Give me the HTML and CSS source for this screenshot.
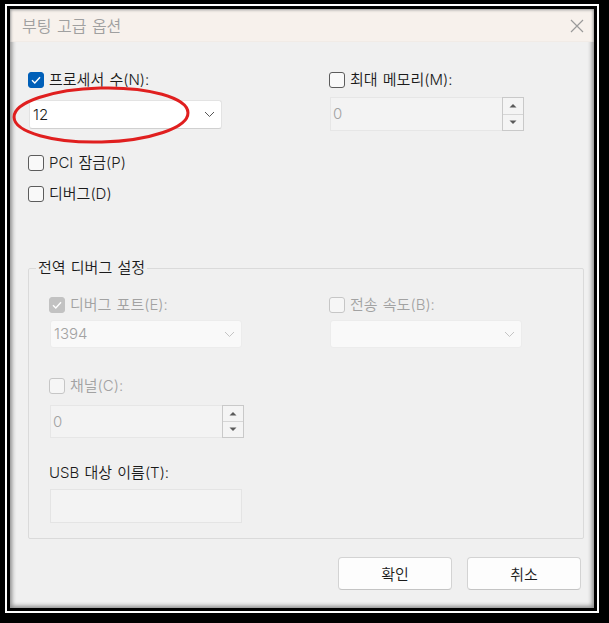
FILE: index.html
```html
<!DOCTYPE html>
<html lang="ko">
<head>
<meta charset="utf-8">
<link rel="stylesheet" href="styles.css">
</head>
<body>
<div class="frame">
  <div class="dialog">
    <div class="titlebar">
      <span class="title">부팅 고급 옵션</span>
      <svg class="close" width="14" height="14" viewBox="0 0 14 14"><path d="M1 1 L13 13 M13 1 L1 13" stroke="#9a9a9a" stroke-width="1.2" fill="none"/></svg>
    </div>
    <div class="content">
      <div class="top">
        <div class="col">
          <label class="check-row">
            <span class="box checked"><svg width="16" height="16" viewBox="0 0 16 16"><path d="M4 8.2 L6.8 11 L12 5.2" stroke="#fff" stroke-width="1.4" fill="none"/></svg></span>
            <span class="lbl">프로세서 수(N):</span>
          </label>
          <div class="combo proc">
            <span class="val">12</span>
            <svg class="chev" width="11" height="7" viewBox="0 0 11 7"><path d="M1 1 L5.5 5.5 L10 1" stroke="#555" stroke-width="1" fill="none"/></svg>
          </div>
          <label class="check-row pci">
            <span class="box"></span>
            <span class="lbl">PCI 잠금(P)</span>
          </label>
          <label class="check-row dbg">
            <span class="box"></span>
            <span class="lbl">디버그(D)</span>
          </label>
        </div>
        <div class="col">
          <label class="check-row">
            <span class="box"></span>
            <span class="lbl">최대 메모리(M):</span>
          </label>
          <div class="spin mem">
            <span class="val dis">0</span>
            <div class="spin-btns">
              <span class="sb"><svg width="8" height="5" viewBox="0 0 8 5"><path d="M0.5 4.5 L4 1 L7.5 4.5 Z" fill="#5a5a5a"/></svg></span>
              <span class="sb"><svg width="8" height="5" viewBox="0 0 8 5"><path d="M0.5 0.5 L4 4 L7.5 0.5 Z" fill="#5a5a5a"/></svg></span>
            </div>
          </div>
        </div>
      </div>

      <fieldset class="group">
        <legend>전역 디버그 설정</legend>
        <div class="group-in">
          <div class="top">
            <div class="col">
              <label class="check-row">
                <span class="box checked disabled"><svg width="16" height="16" viewBox="0 0 16 16"><path d="M4 8.2 L6.8 11 L12 5.2" stroke="#fff" stroke-width="1.4" fill="none"/></svg></span>
                <span class="lbl dis">디버그 포트(E):</span>
              </label>
              <div class="combo disabled port">
                <span class="val dis">1394</span>
                <svg class="chev" width="11" height="7" viewBox="0 0 11 7"><path d="M1 1 L5.5 5.5 L10 1" stroke="#c4c4c4" stroke-width="1" fill="none"/></svg>
              </div>
              <label class="check-row chan">
                <span class="box disabled"></span>
                <span class="lbl dis">채널(C):</span>
              </label>
              <div class="spin chanspin">
                <span class="val dis">0</span>
                <div class="spin-btns">
                  <span class="sb"><svg width="8" height="5" viewBox="0 0 8 5"><path d="M0.5 4.5 L4 1 L7.5 4.5 Z" fill="#5a5a5a"/></svg></span>
                  <span class="sb"><svg width="8" height="5" viewBox="0 0 8 5"><path d="M0.5 0.5 L4 4 L7.5 0.5 Z" fill="#5a5a5a"/></svg></span>
                </div>
              </div>
              <div class="plain-lbl">USB 대상 이름(T):</div>
              <div class="textbox"></div>
            </div>
            <div class="col">
              <label class="check-row">
                <span class="box disabled"></span>
                <span class="lbl dis">전송 속도(B):</span>
              </label>
              <div class="combo disabled speed">
                <span class="val dis"></span>
                <svg class="chev" width="11" height="7" viewBox="0 0 11 7"><path d="M1 1 L5.5 5.5 L10 1" stroke="#c4c4c4" stroke-width="1" fill="none"/></svg>
              </div>
            </div>
          </div>
        </div>
      </fieldset>

      <div class="footer">
        <button class="btn">확인</button>
        <button class="btn">취소</button>
      </div>

      <svg class="mark" width="182" height="62" viewBox="0 0 182 62"><ellipse cx="91" cy="31" rx="87" ry="27" stroke="#e01f1f" stroke-width="3" fill="none" transform="rotate(-1.5 91 31)"/></svg>
    </div>
  </div>
</div>
</body>
</html>
```

FILE: styles.css
```css
* { box-sizing: border-box; }
html, body { margin: 0; padding: 0; }
body {
  background: #000;
  width: 609px;
  height: 623px;
  overflow: hidden;
  font-family: "Inter", "Noto Sans CJK KR", sans-serif;
  font-size: 15px;
  font-weight: 350;
  word-spacing: 1px;
  color: #1b1b1b;
}
.frame {
  margin: 4px 10px 0 5px;
  border: 2px solid #fff;
  background: #000;
  padding: 3px;
  height: 609px;
}
.dialog {
  height: 599px;
  background: #f0f0f0;
  box-shadow: inset 0 0 4px 2px #8a8a8a;
  position: relative;
  display: flex;
  flex-direction: column;
}
.titlebar {
  height: 33px;
  background: #f7f1ec;
  display: flex;
  align-items: center;
  justify-content: space-between;
  padding: 0 10px 0 12px;
  box-shadow: inset 0 3px 3px -2px #9a9a9a, inset 3px 0 3px -2px #9a9a9a, inset -3px 0 3px -2px #9a9a9a;
}
.title {
  color: #a0a0a0;
  font-size: 16px;
  line-height: 18px;
}
.close { display: block; }
.content {
  position: relative;
  flex: 1;
  padding: 29px 0 0 18px;
}
.top {
  display: grid;
  grid-template-columns: 301px 1fr;
}
.group .top { grid-template-columns: 280px 1fr; }
.col { display: flex; flex-direction: column; align-items: flex-start; }
.check-row {
  display: flex;
  align-items: center;
  height: 18px;
  gap: 5px;
  line-height: 18px;
}
.box {
  width: 16px;
  height: 16px;
  border: 1px solid #5c5c5c;
  border-radius: 3px;
  background: #f9f9f9;
  display: block;
  flex: none;
}
.box svg { display: block; margin: -1px; }
.box.checked { background: #005fb8; border-color: #005fb8; }
.box.disabled { border-color: #c6c6c6; background: #f6f6f6; }
.box.checked.disabled { background: #c2c2c2; border-color: #c2c2c2; }
.lbl { white-space: nowrap; }
.dis { color: #a2a2a2; }
.val { line-height: 18px; }

.combo {
  display: flex;
  align-items: center;
  justify-content: space-between;
  width: 193px;
  height: 29px;
  background: #fff;
  border: 1px solid #e3e3e3;
  border-bottom-color: #d0d0d0;
  border-radius: 3px;
  padding: 0 6px 0 3px;
}
.combo.proc { margin-top: 11px; margin-left: 1px; }
.combo.disabled {
  background: #f9f9f9;
  border-color: #ececec;
  width: 192px;
  height: 28px;
  margin-top: 6px;
  margin-left: 1px;
}
.chev { display: block; }

.check-row.pci { margin-top: 25px; }
.check-row.dbg { margin-top: 13px; }

.spin {
  display: flex;
  justify-content: space-between;
  align-items: center;
  width: 194px;
  height: 34px;
  background: #f3f3f3;
  border: 1px solid #e6e6e6;
  padding-left: 2px;
  margin-left: 1px;
}
.spin.mem { margin-top: 8px; }
.spin.chanspin { margin-top: 10px; height: 33px; }
.spin-btns {
  display: flex;
  flex-direction: column;
  width: 22px;
  height: calc(100% + 2px);
  margin-right: -1px;
  border: 1px solid #c9c9c9;
  background: #f4f4f4;
}
.sb {
  flex: 1;
  display: flex;
  align-items: center;
  justify-content: center;
}
.sb + .sb { border-top: 1px solid #d6d6d6; }
.sb svg { display: block; }

.group {
  margin: 56px 0 0 0;
  padding: 0;
  width: 556px;
  border: 1px solid #dadada;
  border-radius: 2px;
  min-inline-size: 0;
}
.group legend {
  margin-left: 7px;
  padding: 0 2px;
  line-height: 18px;
  font-size: 15px;
  color: #1b1b1b;
}
.group-in { padding: 19px 0 15px 20px; }
.check-row.chan { margin-top: 29px; }
.plain-lbl { margin-top: 26px; line-height: 18px; white-space: nowrap; }
.textbox {
  margin-top: 7px;
  margin-left: 1px;
  width: 192px;
  height: 34px;
  background: #f3f3f3;
  border: 1px solid #e4e4e4;
}

.footer {
  display: flex;
  justify-content: flex-end;
  gap: 15px;
  padding-right: 13px;
  margin-top: 18px;
}
.btn {
  width: 114px;
  height: 33px;
  background: #fdfdfd;
  border: 1px solid #d3d3d3;
  border-bottom-color: #c4c4c4;
  border-radius: 4px;
  font-family: inherit;
  font-size: 15px;
  font-weight: 350;
  word-spacing: 1px;
  color: #1b1b1b;
  padding: 0;
}

.mark {
  position: absolute;
  left: 0px;
  top: 42px;
}
```
